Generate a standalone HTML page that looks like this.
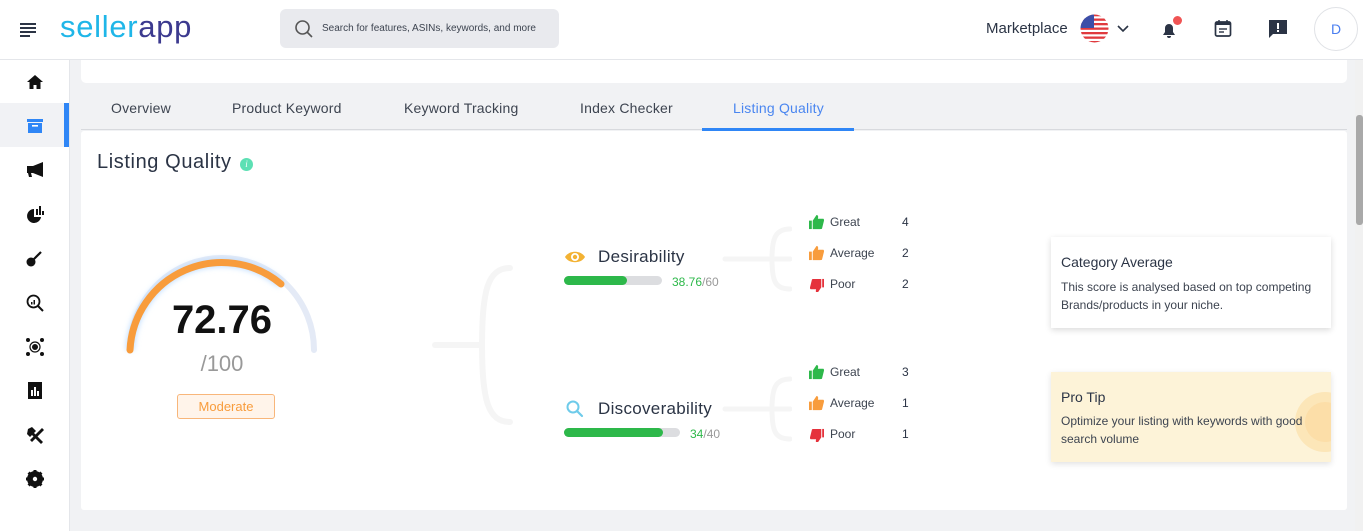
<!DOCTYPE html>
<html><head><meta charset="utf-8"><style>
*{box-sizing:border-box;margin:0;padding:0}
body{width:1363px;height:531px;overflow:hidden;background:#f1f2f4;font-family:"Liberation Sans",sans-serif;position:relative;color:#2b3445}
.a{position:absolute}
.hdr{left:0;top:0;width:1363px;height:60px;background:#fff;border-bottom:1px solid #e4e6ea}
.side{left:0;top:60px;width:70px;height:471px;background:#fff;border-right:1px solid #e4e6ea}
.tab{top:100px;font-size:14px;color:#3d4450;letter-spacing:0.2px}
.lbl{font-size:12px;color:#3d4450}
.num{font-size:12px;color:#2b3445}
</style></head><body>
<div class="a hdr"></div>
<div class="a" style="left:20px;top:23px;width:16px;height:2px;background:#2b3445"></div>
<div class="a" style="left:20px;top:27px;width:16px;height:2px;background:#2b3445"></div>
<div class="a" style="left:20px;top:31px;width:16px;height:2px;background:#2b3445"></div>
<div class="a" style="left:20px;top:35px;width:10px;height:2px;background:#2b3445"></div>
<div class="a" style="left:60px;top:9px;font-size:31px;letter-spacing:0.7px"><span style="color:#1fb6e8">seller</span><span style="color:#3c3a8f">app</span></div>
<div class="a" style="left:280px;top:9px;width:279px;height:39px;background:#e9eaee;border-radius:6px"></div>
<svg class="a" style="left:294px;top:19px" width="20" height="20"><circle cx="8.5" cy="8.5" r="6.5" fill="none" stroke="#555" stroke-width="1.6"/><line x1="13" y1="13" x2="18" y2="18" stroke="#555" stroke-width="1.6"/></svg>
<div class="a" style="left:322px;top:23px;font-size:10px;color:#3d4450">Search for features, ASINs, keywords, and more</div>
<div class="a" style="left:986px;top:20px;font-size:15px;color:#2b3445">Marketplace</div>
<svg class="a" style="left:1080px;top:14px" width="29" height="29"><defs><clipPath id="c"><circle cx="14.5" cy="14.5" r="14"/></clipPath></defs><g clip-path="url(#c)"><rect width="29" height="29" fill="#fff"/><rect y="0" width="29" height="2.3" fill="#e03a3e"/><rect y="4.5" width="29" height="2.3" fill="#e03a3e"/><rect y="9" width="29" height="2.3" fill="#e03a3e"/><rect y="13.5" width="29" height="2.3" fill="#e03a3e"/><rect y="18" width="29" height="2.3" fill="#e03a3e"/><rect y="22.5" width="29" height="2.3" fill="#e03a3e"/><rect y="27" width="29" height="2.3" fill="#e03a3e"/><rect width="14" height="14" fill="#3c4fa8"/></g></svg>
<svg class="a" style="left:1117px;top:25px" width="12" height="8"><path d="M1 1l5 5 5-5" fill="none" stroke="#2b3445" stroke-width="1.6"/></svg>
<svg class="a" style="left:1160px;top:20px" width="20" height="20"><path d="M3 15h12l-2-3V8a4 4 0 0 0-8 0v4z M7 16a2 2 0 0 0 4 0z" fill="#2b3445"/></svg>
<div class="a" style="left:1173px;top:16px;width:9px;height:9px;border-radius:50%;background:#f05454"></div>
<svg class="a" style="left:1214px;top:19px" width="18" height="19"><rect x="1.5" y="3" width="15" height="14" rx="1.5" fill="none" stroke="#2b3445" stroke-width="1.7"/><rect x="1.5" y="3" width="15" height="3" fill="#2b3445"/><line x1="5" y1="1" x2="5" y2="4" stroke="#2b3445" stroke-width="1.5"/><line x1="13" y1="1" x2="13" y2="4" stroke="#2b3445" stroke-width="1.5"/><line x1="5" y1="10" x2="13" y2="10" stroke="#2b3445" stroke-width="1.4"/><line x1="5" y1="13" x2="10" y2="13" stroke="#2b3445" stroke-width="1.4"/></svg>
<svg class="a" style="left:1269px;top:20px" width="19" height="18"><path d="M0 0h18v14H4l-4 4z" fill="#2b3445"/><rect x="8" y="3" width="2" height="6" fill="#fff"/><rect x="8" y="10" width="2" height="2" fill="#fff"/></svg>
<div class="a" style="left:1314px;top:7px;width:44px;height:44px;border-radius:50%;border:1px solid #e0e2e6;color:#4a7ef0;font-size:14px;text-align:center;line-height:42px">D</div>

<div class="a side"></div>
<div class="a" style="left:0;top:103px;width:69px;height:44px;background:#f1f2f5"></div>
<div class="a" style="left:64px;top:103px;width:5px;height:44px;background:#2f86f6"></div>
<svg class="a" style="left:26px;top:74px" width="18" height="16"><path d="M9 1L1 8h2.5v7h4v-4h3v4h4V8H17z" fill="#111"/></svg>
<svg class="a" style="left:27px;top:119px" width="16" height="14"><rect x="0" y="0" width="16" height="3" fill="#2f86f6"/><rect x="1" y="4" width="14" height="10" fill="#2f86f6"/><rect x="5" y="6" width="6" height="1.6" fill="#fff"/></svg>
<svg class="a" style="left:27px;top:162px" width="17" height="16"><path d="M0 4h6l10-4v15L6 11H4l1 4H2l-1-4H0z" fill="#111"/></svg>
<svg class="a" style="left:26px;top:206px" width="18" height="17"><path d="M8 3a7 7 0 1 0 7 8H8z" fill="#111"/><rect x="10" y="3" width="2" height="6" fill="#111"/><rect x="13" y="0" width="2" height="9" fill="#111"/><rect x="16" y="5" width="2" height="4" fill="#111"/></svg>
<svg class="a" style="left:26px;top:250px" width="17" height="17"><circle cx="5" cy="12" r="4.5" fill="#111"/><line x1="7" y1="10" x2="15" y2="2" stroke="#111" stroke-width="2.2"/></svg>
<svg class="a" style="left:26px;top:294px" width="18" height="18"><circle cx="7.5" cy="7.5" r="6" fill="none" stroke="#111" stroke-width="1.8"/><line x1="12" y1="12" x2="17" y2="17" stroke="#111" stroke-width="2"/><rect x="5" y="8" width="1.5" height="2.5" fill="#111"/><rect x="7.5" y="6" width="1.5" height="4.5" fill="#111"/></svg>
<svg class="a" style="left:25px;top:337px" width="20" height="20"><circle cx="10" cy="10" r="3" fill="#111"/><circle cx="10" cy="10" r="5" fill="none" stroke="#111" stroke-width="1.2"/><circle cx="3" cy="3" r="2" fill="#111"/><circle cx="17" cy="3" r="2" fill="#111"/><circle cx="3" cy="17" r="2" fill="#111"/><circle cx="17" cy="17" r="2" fill="#111"/></svg>
<svg class="a" style="left:28px;top:382px" width="14" height="17"><rect width="14" height="17" fill="#111"/><rect x="3" y="8" width="2" height="6" fill="#fff"/><rect x="6" y="5" width="2" height="9" fill="#fff"/><rect x="9" y="9" width="2" height="5" fill="#fff"/></svg>
<svg class="a" style="left:26px;top:426px" width="18" height="18"><path d="M2 3l4-2 4 4-2 2 9 9-2 2-9-9-2 2-3-3z" fill="#111"/><path d="M16 2l-12 12 2 2 12-12z" fill="#111"/></svg>
<svg class="a" style="left:26px;top:470px" width="18" height="18"><circle cx="9" cy="9" r="6" fill="none" stroke="#111" stroke-width="4"/><g stroke="#111" stroke-width="3"><line x1="9" y1="0" x2="9" y2="18"/><line x1="0" y1="9" x2="18" y2="9"/><line x1="2.6" y1="2.6" x2="15.4" y2="15.4"/><line x1="15.4" y1="2.6" x2="2.6" y2="15.4"/></g><circle cx="9" cy="9" r="2.2" fill="#fff"/></svg>

<div class="a" style="left:81px;top:60px;width:1266px;height:23px;background:#fff;border-radius:0 0 5px 5px"></div>
<div class="a tab" style="left:111px">Overview</div>
<div class="a tab" style="left:232px">Product Keyword</div>
<div class="a tab" style="left:404px">Keyword Tracking</div>
<div class="a tab" style="left:580px">Index Checker</div>
<div class="a tab" style="left:733px;color:#4a86f0">Listing Quality</div>
<div class="a" style="left:81px;top:129px;width:1266px;height:1px;background:#d8dade"></div>
<div class="a" style="left:702px;top:128px;width:152px;height:3px;background:#2f86f6"></div>
<div class="a" style="left:81px;top:131px;width:1266px;height:379px;background:#fff;border-radius:3px"></div>
<div class="a" style="left:1355px;top:60px;width:8px;height:471px;background:#f1f1f1"></div>
<div class="a" style="left:1356px;top:115px;width:7px;height:110px;background:#a9a9a9;border-radius:3px"></div>

<div class="a" style="left:97px;top:151px;font-size:20px;color:#2b3445;letter-spacing:0.6px">Listing Quality</div>
<div class="a" style="left:240px;top:158px;width:13px;height:13px;border-radius:50%;background:#5de0b4;color:#fff;font-size:9px;font-style:italic;text-align:center;line-height:13px;font-family:'Liberation Serif',serif">i</div>

<svg class="a" style="left:110px;top:240px" width="230" height="130">
<defs><filter id="g"><feGaussianBlur stdDeviation="3"/></filter></defs>
<path d="M20 110 A92 92 0 0 1 204 110" fill="none" stroke="#e4eaf6" stroke-width="6" stroke-linecap="round"/>
<path d="M20 110 A92 92 0 0 1 171 44" fill="none" stroke="#bcdcff" stroke-width="8" filter="url(#g)"/>
<path d="M20 110 A92 92 0 0 1 171 44" fill="none" stroke="#f89c3c" stroke-width="7" stroke-linecap="round"/>
</svg>
<div class="a" style="left:130px;top:298px;width:184px;text-align:center;font-size:40px;font-weight:bold;color:#111">72.76</div>
<div class="a" style="left:130px;top:351px;width:184px;text-align:center;font-size:22px;color:#999">/100</div>
<div class="a" style="left:177px;top:394px;width:98px;height:25px;border:1px solid #f8b67a;background:#fff4ea;border-radius:3px;color:#f89c3c;font-size:13px;text-align:center;line-height:23px">Moderate</div>

<svg class="a" style="left:430px;top:260px" width="90" height="170"><g fill="none" stroke="#f5f5f5" stroke-width="6" stroke-linecap="round"><path d="M80 8 C58 8 52 30 52 85 C52 140 58 162 80 162"/><line x1="5" y1="85" x2="52" y2="85"/></g></svg>
<svg class="a" style="left:720px;top:225px" width="72" height="70"><g fill="none" stroke="#f5f5f5" stroke-width="5" stroke-linecap="round"><path d="M70 4 C55 4 52 14 52 34 C52 56 55 64 70 64"/><line x1="5" y1="34" x2="70" y2="34"/></g></svg>
<svg class="a" style="left:720px;top:375px" width="72" height="70"><g fill="none" stroke="#f5f5f5" stroke-width="5" stroke-linecap="round"><path d="M70 4 C55 4 52 14 52 34 C52 56 55 64 70 64"/><line x1="5" y1="34" x2="70" y2="34"/></g></svg>

<svg class="a" style="left:564px;top:249px" width="22" height="16"><path d="M1 8C5 1 17 1 21 8C17 15 5 15 1 8z" fill="#f3b233"/><circle cx="11" cy="8" r="4" fill="#fff"/><circle cx="11" cy="8" r="2.2" fill="#f3b233"/></svg>
<div class="a" style="left:598px;top:247px;font-size:17px;color:#2b3445;letter-spacing:0.3px">Desirability</div>
<div class="a" style="left:564px;top:276px;width:98px;height:9px;border-radius:5px;background:#dcdde0"></div>
<div class="a" style="left:564px;top:276px;width:63px;height:9px;border-radius:5px;background:#2db84a"></div>
<div class="a" style="left:672px;top:275px;font-size:12px;color:#999"><span style="color:#2db84a">38.76</span>/60</div>

<svg class="a" style="left:566px;top:400px" width="20" height="18"><circle cx="7" cy="7" r="5.5" fill="none" stroke="#6ecbea" stroke-width="2"/><line x1="11" y1="11" x2="16" y2="16" stroke="#6ecbea" stroke-width="2.2" stroke-linecap="round"/></svg>
<div class="a" style="left:598px;top:399px;font-size:17px;color:#2b3445;letter-spacing:0.3px">Discoverability</div>
<div class="a" style="left:564px;top:428px;width:116px;height:9px;border-radius:5px;background:#dcdde0"></div>
<div class="a" style="left:564px;top:428px;width:99px;height:9px;border-radius:5px;background:#2db84a"></div>
<div class="a" style="left:690px;top:427px;font-size:12px;color:#999"><span style="color:#2db84a">34</span>/40</div>

<svg width="0" height="0" style="position:absolute"><defs>
<symbol id="up" viewBox="0 0 16 16"><rect x="0" y="6" width="3" height="9"/><path d="M4 6l4-6c2 0 2 2 1.5 4H15c1 0 1 1 1 2l-2 8c0 1-1 1-2 1H4z"/></symbol>
</defs></svg>
<svg class="a" style="left:809px;top:215px" width="15" height="15" fill="#2db84a"><use href="#up"/></svg>
<div class="a lbl" style="left:830px;top:215px">Great</div><div class="a num" style="left:902px;top:215px">4</div>
<svg class="a" style="left:809px;top:246px" width="15" height="15" fill="#f89c3c"><use href="#up"/></svg>
<div class="a lbl" style="left:830px;top:246px">Average</div><div class="a num" style="left:902px;top:246px">2</div>
<svg class="a" style="left:809px;top:277px" width="15" height="15" fill="#e5323c"><g transform="rotate(180 8 8)"><use href="#up"/></g></svg>
<div class="a lbl" style="left:830px;top:277px">Poor</div><div class="a num" style="left:902px;top:277px">2</div>

<svg class="a" style="left:809px;top:365px" width="15" height="15" fill="#2db84a"><use href="#up"/></svg>
<div class="a lbl" style="left:830px;top:365px">Great</div><div class="a num" style="left:902px;top:365px">3</div>
<svg class="a" style="left:809px;top:396px" width="15" height="15" fill="#f89c3c"><use href="#up"/></svg>
<div class="a lbl" style="left:830px;top:396px">Average</div><div class="a num" style="left:902px;top:396px">1</div>
<svg class="a" style="left:809px;top:427px" width="15" height="15" fill="#e5323c"><g transform="rotate(180 8 8)"><use href="#up"/></g></svg>
<div class="a lbl" style="left:830px;top:427px">Poor</div><div class="a num" style="left:902px;top:427px">1</div>

<div class="a" style="left:1051px;top:237px;width:280px;height:91px;background:#fff;box-shadow:0 2px 6px rgba(0,0,0,.15)"></div>
<div class="a" style="left:1061px;top:254px;font-size:14px;color:#2b3445">Category Average</div>
<div class="a" style="left:1061px;top:278px;font-size:12px;line-height:18px;color:#3d4450;width:270px">This score is analysed based on top competing Brands/products in your niche.</div>

<div class="a" style="left:1051px;top:372px;width:280px;height:90px;background:#fdf3d8;box-shadow:0 2px 6px rgba(0,0,0,.12);overflow:hidden"><div style="position:absolute;left:244px;top:20px;width:60px;height:60px;border-radius:50%;background:#fbe2b0;opacity:.8"></div><div style="position:absolute;left:254px;top:30px;width:40px;height:40px;border-radius:50%;background:#fcd99c;opacity:.6"></div></div>
<div class="a" style="left:1061px;top:389px;font-size:14px;color:#2b3445">Pro Tip</div>
<div class="a" style="left:1061px;top:412px;font-size:12px;line-height:18px;color:#3d4450;width:275px">Optimize your listing with keywords with good search volume</div>
</body></html>
